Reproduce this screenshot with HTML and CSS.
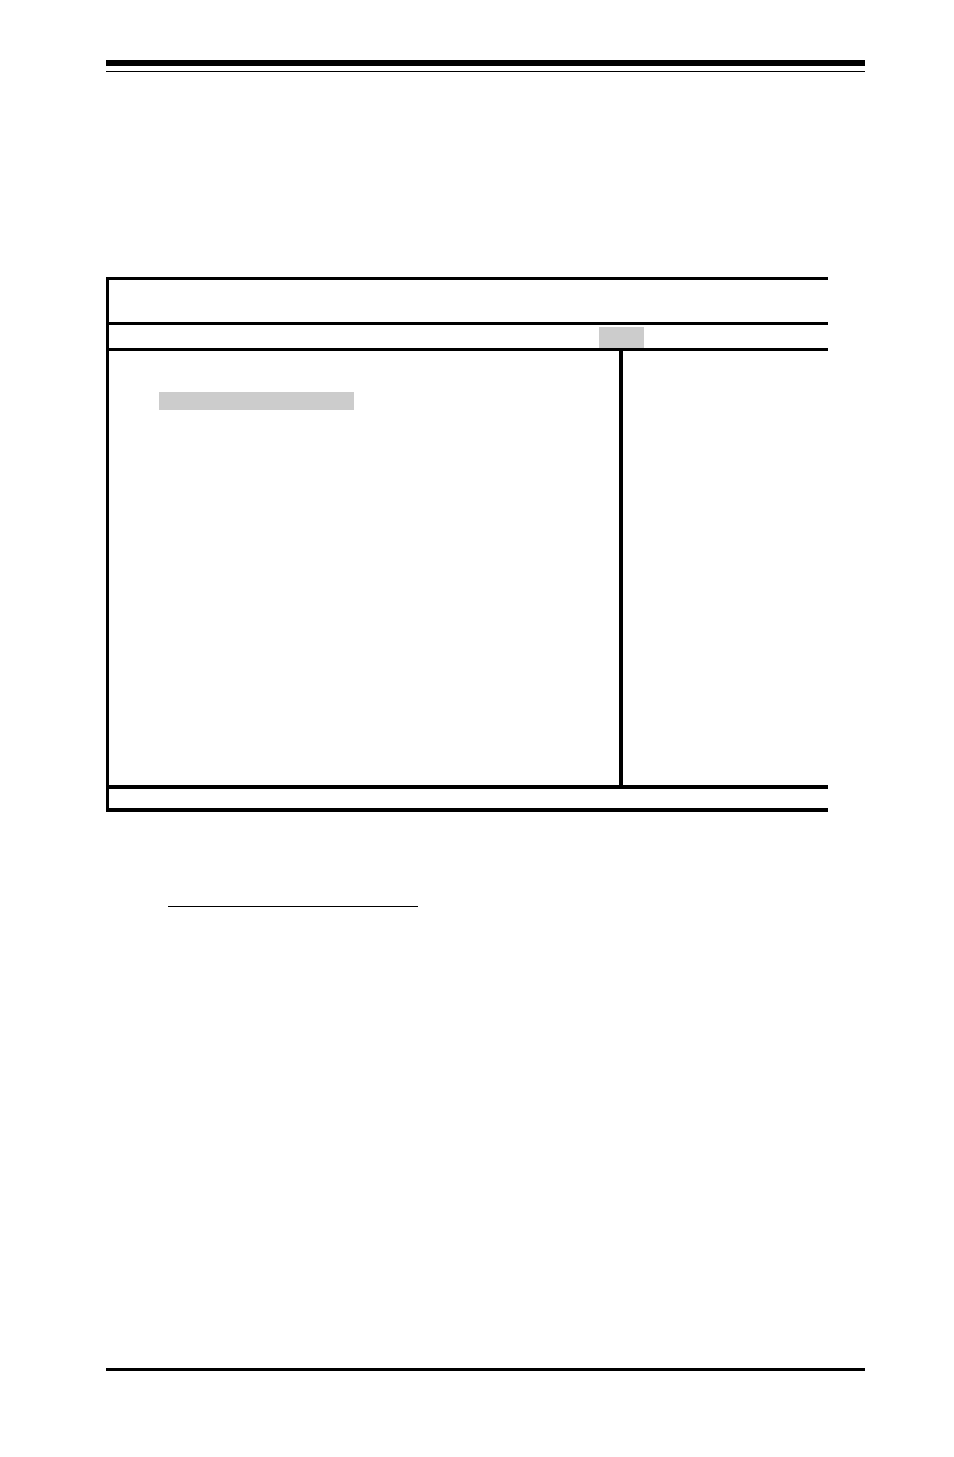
FILE: index.html
```html
<!DOCTYPE html>
<html lang="en">
<head>
  <meta charset="UTF-8">
  <meta name="viewport" content="width=device-width, initial-scale=1">
  <title>Setup screen</title>
  <link rel="stylesheet" href="styles.css">
</head>
<body>
  <header class="page-head"></header>

  <main>
    <section class="screen">
      <div class="title"></div>
      <div class="menu">
        <div class="tab"></div>
      </div>
      <div class="panes">
        <div class="options">
          <div class="selected"></div>
        </div>
        <div class="help"></div>
      </div>
      <div class="status"></div>
    </section>

    <div class="underline"></div>
  </main>

  <footer class="page-foot"></footer>
</body>
</html>
```

FILE: styles.css
```css
* {
    box-sizing: border-box;
}
body {
    display: flex;
    flex-direction: column;
    min-height: 100vh;
    margin: 0;
    padding: 60px 89px 86px 106px;
    background: #fff;
    font-family: "Liberation Sans", sans-serif;
}

/* thick rule with a thin one below */
.page-head {
    height: 12px;
    border-top: 6px solid #000;
    border-bottom: 1px solid #000;
}
main {
    flex: 1;
    padding-top: 205px;
}

/* setup screen, open on the right side */
.screen {
    margin-right: 37px;
    border: solid #000;
    border-width: 3px 0 4px 3px;
}
.title {
    height: 45px;
    border-bottom: 3px solid #000;
}
.menu {
    display: flex;
    justify-content: flex-end;
    height: 26px;
    padding: 2px 184px 0 0;
    border-bottom: 3px solid #000;
}
.tab {
    width: 45px;
    background: #ccc;
}
.panes {
    display: grid;
    grid-template-columns: 1fr 205px;
    min-height: 434px;
}
.options {
    padding: 41px 50px;
    border-right: 4px solid #000;
}
.selected {
    width: 195px;
    height: 18px;
    background: #ccc;
}
.status {
    height: 23px;
    border-top: 4px solid #000;
}

.underline {
    width: 250px;
    margin: 94px 0 0 62px;
    border-top: 1px solid #000;
}
.page-foot {
    border-top: 3px solid #000;
}
```
